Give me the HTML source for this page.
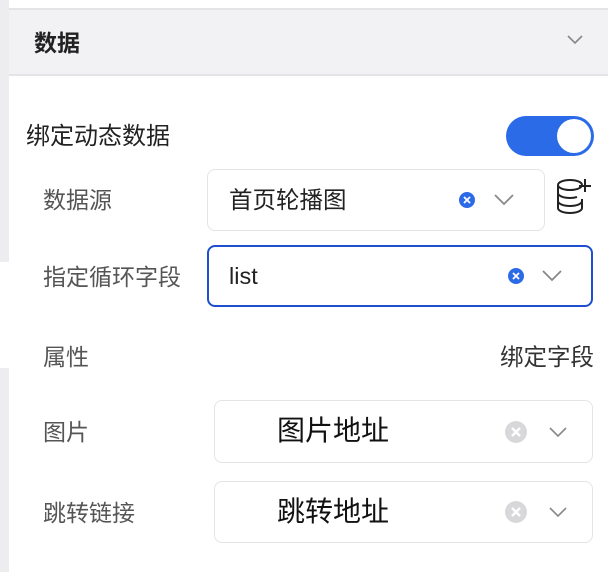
<!DOCTYPE html>
<html><head><meta charset="utf-8"><style>
*{margin:0;padding:0;box-sizing:border-box}
body{width:608px;height:572px;background:#fff;position:relative;overflow:hidden;font-family:"Liberation Sans","Noto Sans CJK SC",sans-serif}
.a{position:absolute}
.lbl{position:absolute;font-size:23px;color:#555;line-height:30px}
.box{position:absolute;border:1.5px solid #e4e4e6;border-radius:8px;background:#fff}
</style></head><body>
<div class="a" style="left:0;top:0;width:9px;height:262px;background:#ededf0"></div>
<div class="a" style="left:0;top:368px;width:9px;height:204px;background:#ededf0"></div>
<div class="a" style="left:9px;top:8px;width:599px;height:2px;background:#e4e4e6"></div>
<div class="a" style="left:9px;top:10px;width:599px;height:64px;background:#f2f2f4"></div>
<div class="a" style="left:9px;top:74px;width:599px;height:2px;background:#e4e4e6"></div>
<div class="a" style="left:34px;top:27px;font-size:23px;font-weight:bold;color:#222;line-height:32px">数据</div>
<svg class="a" style="left:566px;top:34px" width="18" height="12"><path d="M2 2l7 7 7-7" fill="none" stroke="#888" stroke-width="1.6"/></svg>

<div class="a" style="left:26px;top:121px;font-size:24px;color:#222;line-height:32px">绑定动态数据</div>
<div class="a" style="left:506px;top:116px;width:88px;height:40px;border-radius:20px;background:#2c6be8"></div>
<div class="a" style="left:557px;top:119px;width:34px;height:34px;border-radius:50%;background:#fff"></div>

<div class="lbl" style="left:43px;top:185px">数据源</div>
<div class="box" style="left:207px;top:169px;width:338px;height:62px"></div>
<div class="a" style="left:229px;top:185px;font-size:23.5px;color:#222;line-height:30px">首页轮播图</div>
<svg class="a" style="left:458px;top:191px" width="18" height="18"><circle cx="9" cy="9" r="8" fill="#2c6be8"/><path d="M6 6l6 6M12 6l-6 6" stroke="#fff" stroke-width="1.8"/></svg>
<svg class="a" style="left:493px;top:193px" width="22" height="14"><path d="M2 2l9 9 9-9" fill="none" stroke="#888" stroke-width="1.8"/></svg>
<svg class="a" style="left:556px;top:176px" width="36" height="39" fill="none" stroke="#222" stroke-width="2"><ellipse cx="14" cy="9" rx="12" ry="5"/><path d="M2 9v23c0 2.8 5.4 5 12 5s12-2.2 12-5V23M2 17c0 2.8 5.4 5 12 5 3 0 5-.4 7-1M2 25c0 2.8 5.4 5 12 5s12-2.2 12-5M29 3v13M23 10h12"/></svg>

<div class="lbl" style="left:43px;top:262px">指定循环字段</div>
<div class="a" style="left:207px;top:245px;width:386px;height:62px;border:2px solid #1d4fcf;border-radius:8px"></div>
<div class="a" style="left:229px;top:261px;font-size:23.5px;color:#222;line-height:30px">list</div>
<svg class="a" style="left:507px;top:267px" width="18" height="18"><circle cx="9" cy="9" r="8" fill="#2c6be8"/><path d="M6 6l6 6M12 6l-6 6" stroke="#fff" stroke-width="1.8"/></svg>
<svg class="a" style="left:541px;top:269px" width="22" height="14"><path d="M2 2l9 9 9-9" fill="none" stroke="#888" stroke-width="1.8"/></svg>

<div class="lbl" style="left:43px;top:342px">属性</div>
<div class="a" style="right:14px;top:342px;font-size:23.5px;color:#333;line-height:30px">绑定字段</div>

<div class="lbl" style="left:43px;top:417px">图片</div>
<div class="box" style="left:214px;top:400px;width:379px;height:63px"></div>
<div class="a" style="left:277px;top:414px;font-size:28px;color:#111;line-height:34px">图片地址</div>
<svg class="a" style="left:504px;top:420px" width="24" height="24"><circle cx="12" cy="12" r="11" fill="#d8d8da"/><path d="M8 8l8 8M16 8l-8 8" stroke="#fff" stroke-width="2.4"/></svg>
<svg class="a" style="left:548px;top:426px" width="20" height="12"><path d="M2 2l8 8 8-8" fill="none" stroke="#888" stroke-width="1.6"/></svg>

<div class="lbl" style="left:43px;top:498px">跳转链接</div>
<div class="box" style="left:214px;top:481px;width:379px;height:62px"></div>
<div class="a" style="left:277px;top:495px;font-size:28px;color:#111;line-height:34px">跳转地址</div>
<svg class="a" style="left:504px;top:500px" width="24" height="24"><circle cx="12" cy="12" r="11" fill="#d8d8da"/><path d="M8 8l8 8M16 8l-8 8" stroke="#fff" stroke-width="2.4"/></svg>
<svg class="a" style="left:548px;top:506px" width="20" height="12"><path d="M2 2l8 8 8-8" fill="none" stroke="#888" stroke-width="1.6"/></svg>
</body></html>
